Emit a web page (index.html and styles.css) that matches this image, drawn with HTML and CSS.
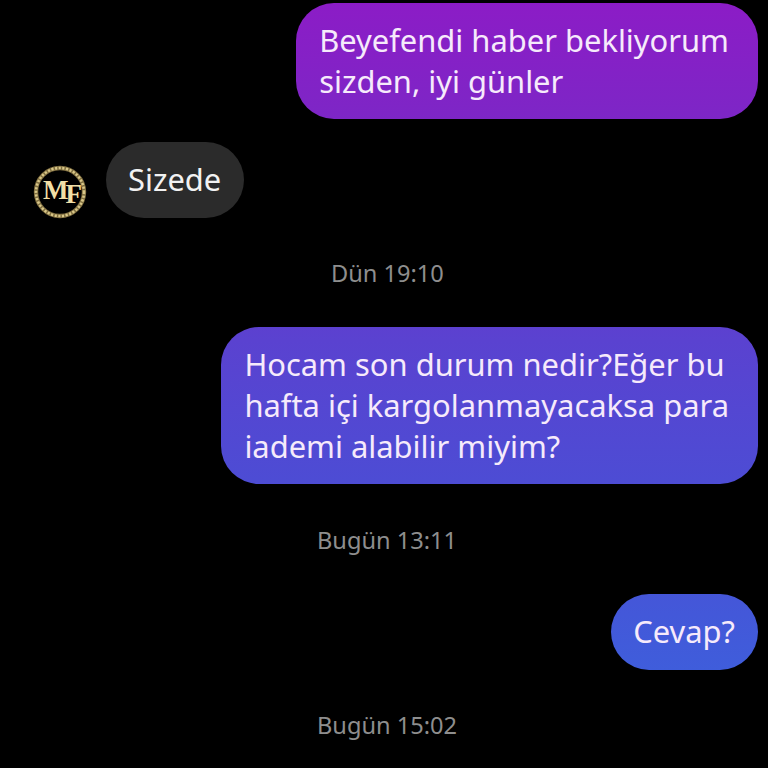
FILE: index.html
```html
<!DOCTYPE html>
<html lang="tr">

<head>
    <meta charset="UTF-8">
    <meta name="viewport" content="width=device-width, initial-scale=1.0">
    <title>Mesajlar</title>
    <link rel="stylesheet" href="styles.css">
</head>

<body>
    <div class="chat">
        <div class="row row-sent row-first">
            <div class="bubble sent wrapped">Beyefendi haber bekliyorum<br>sizden, iyi günler</div>
        </div>
        <div class="row row-received">
            <div class="avatar">
                <svg width="54" height="54" viewBox="0 0 54 54">
                    <circle cx="27" cy="27" r="24" fill="none" stroke="#7f6e40" stroke-width="4.4"/>
                    <circle cx="27" cy="27" r="24" fill="none" stroke="#d8c688" stroke-width="2.6" stroke-dasharray="2.2 1.5"/>
                </svg>
                <span class="mono">M<span class="mono-f">F</span></span>
            </div>
            <div class="bubble received short">Sizede</div>
        </div>
        <div class="time time-1">Dün 19:10</div>
        <div class="row row-sent">
            <div class="bubble sent wrapped">Hocam son durum nedir?Eğer bu<br>hafta içi kargolanmayacaksa para<br>iademi alabilir miyim?</div>
        </div>
        <div class="time time-2">Bugün 13:11</div>
        <div class="row row-sent">
            <div class="bubble sent short">Cevap?</div>
        </div>
        <div class="time time-3">Bugün 15:02</div>
    </div>
</body>

</html>
```
FILE: styles.css
```css
* {
    box-sizing: border-box;
}

html, body {
    height: 100%;
}

body {
    margin: 0;
    background-color: #000;
    overflow: hidden;
    font-family: "Noto Sans", "Open Sans", sans-serif;
}

.chat {
    display: flex;
    flex-direction: column;
    padding: 3px 10px 0 0;
}

.row {
    display: flex;
}

.row-sent {
    justify-content: flex-end;
}

.row-received {
    align-items: flex-end;
    margin-top: 23px;
    padding-left: 33px;
}

.bubble {
    padding: 17px 23px;
    font-size: 30.9px;
    line-height: 41px;
    border-radius: 38px;
    white-space: nowrap;
}

.wrapped {
    padding-right: 29px;
}

.short {
    padding-left: 22px;
    padding-bottom: 18px;
}

/* one gradient over the whole screen, so the colour depends on where the bubble sits */
.sent {
    color: #f6eafb;
    background-image: linear-gradient(180deg, #8c1cc6 0px, #7d26c6 120px, #5a42d0 340px, #4d4cd4 480px, #3f5ddb 670px);
    background-attachment: fixed;
}

.received {
    color: #f2f2f2;
    background-color: #2b2b2b;
}

.avatar {
    position: relative;
    width: 54px;
    height: 54px;
    margin-right: 19px;
    margin-bottom: -1px;
}

.avatar svg {
    display: block;
}

.mono {
    position: absolute;
    left: 10px;
    top: 10px;
    font-family: "Liberation Serif", serif;
    font-size: 27px;
    line-height: 30px;
    font-weight: bold;
    color: #f1dfa6;
    letter-spacing: -3px;
    white-space: nowrap;
}

.mono-f {
    position: relative;
    top: 4px;
}

.time {
    color: #8e8e8e;
    font-size: 23.6px;
    line-height: 30px;
}

.time-1 {
    margin-top: 40px;
    margin-bottom: 39px;
    margin-left: 331px;
}

.time-2 {
    margin-top: 41px;
    margin-bottom: 39px;
    margin-left: 317px;
}

.time-3 {
    margin-top: 40px;
    margin-left: 317px;
}
```
